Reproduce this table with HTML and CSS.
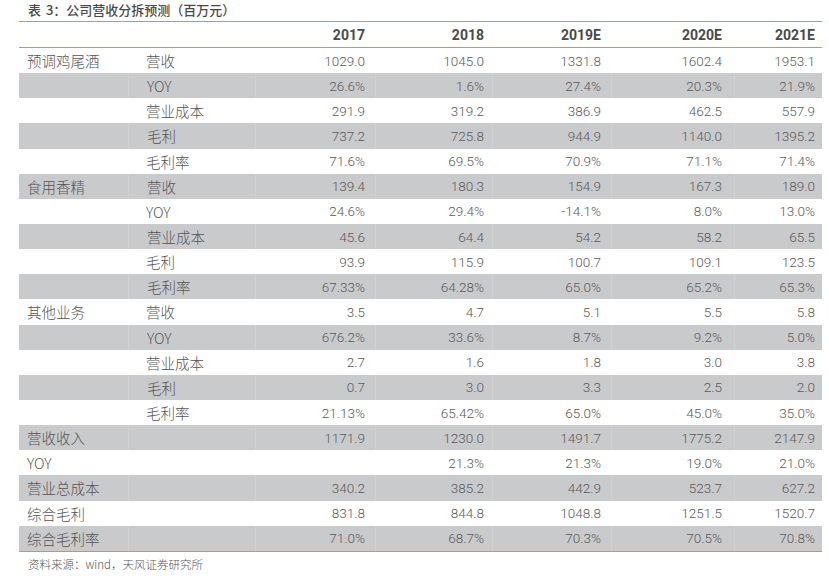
FILE: index.html
```html
<!DOCTYPE html>
<html lang="zh">
<head>
<meta charset="utf-8">
<title>表 3：公司营收分拆预测（百万元）</title>
<link rel="stylesheet" href="styles.css">
</head>
<body>
<div class="page">
  <div class="title">表 3：公司营收分拆预测（百万元）</div>
  <div class="table">
    <div class="row head"><div class="c1"></div><div class="c2"></div><div class="n">2017</div><div class="n">2018</div><div class="n">2019E</div><div class="n">2020E</div><div class="n">2021E</div></div>
    <div class="row"><div class="c1">预调鸡尾酒</div><div class="c2">营收</div><div class="n">1029.0</div><div class="n">1045.0</div><div class="n">1331.8</div><div class="n">1602.4</div><div class="n">1953.1</div></div>
    <div class="row alt"><div class="c1"></div><div class="c2">YOY</div><div class="n">26.6%</div><div class="n">1.6%</div><div class="n">27.4%</div><div class="n">20.3%</div><div class="n">21.9%</div></div>
    <div class="row"><div class="c1"></div><div class="c2">营业成本</div><div class="n">291.9</div><div class="n">319.2</div><div class="n">386.9</div><div class="n">462.5</div><div class="n">557.9</div></div>
    <div class="row alt"><div class="c1"></div><div class="c2">毛利</div><div class="n">737.2</div><div class="n">725.8</div><div class="n">944.9</div><div class="n">1140.0</div><div class="n">1395.2</div></div>
    <div class="row"><div class="c1"></div><div class="c2">毛利率</div><div class="n">71.6%</div><div class="n">69.5%</div><div class="n">70.9%</div><div class="n">71.1%</div><div class="n">71.4%</div></div>
    <div class="row alt"><div class="c1">食用香精</div><div class="c2">营收</div><div class="n">139.4</div><div class="n">180.3</div><div class="n">154.9</div><div class="n">167.3</div><div class="n">189.0</div></div>
    <div class="row"><div class="c1"></div><div class="c2">YOY</div><div class="n">24.6%</div><div class="n">29.4%</div><div class="n">-14.1%</div><div class="n">8.0%</div><div class="n">13.0%</div></div>
    <div class="row alt"><div class="c1"></div><div class="c2">营业成本</div><div class="n">45.6</div><div class="n">64.4</div><div class="n">54.2</div><div class="n">58.2</div><div class="n">65.5</div></div>
    <div class="row"><div class="c1"></div><div class="c2">毛利</div><div class="n">93.9</div><div class="n">115.9</div><div class="n">100.7</div><div class="n">109.1</div><div class="n">123.5</div></div>
    <div class="row alt"><div class="c1"></div><div class="c2">毛利率</div><div class="n">67.33%</div><div class="n">64.28%</div><div class="n">65.0%</div><div class="n">65.2%</div><div class="n">65.3%</div></div>
    <div class="row"><div class="c1">其他业务</div><div class="c2">营收</div><div class="n">3.5</div><div class="n">4.7</div><div class="n">5.1</div><div class="n">5.5</div><div class="n">5.8</div></div>
    <div class="row alt"><div class="c1"></div><div class="c2">YOY</div><div class="n">676.2%</div><div class="n">33.6%</div><div class="n">8.7%</div><div class="n">9.2%</div><div class="n">5.0%</div></div>
    <div class="row"><div class="c1"></div><div class="c2">营业成本</div><div class="n">2.7</div><div class="n">1.6</div><div class="n">1.8</div><div class="n">3.0</div><div class="n">3.8</div></div>
    <div class="row alt"><div class="c1"></div><div class="c2">毛利</div><div class="n">0.7</div><div class="n">3.0</div><div class="n">3.3</div><div class="n">2.5</div><div class="n">2.0</div></div>
    <div class="row"><div class="c1"></div><div class="c2">毛利率</div><div class="n">21.13%</div><div class="n">65.42%</div><div class="n">65.0%</div><div class="n">45.0%</div><div class="n">35.0%</div></div>
    <div class="row alt"><div class="c1">营收收入</div><div class="c2"></div><div class="n">1171.9</div><div class="n">1230.0</div><div class="n">1491.7</div><div class="n">1775.2</div><div class="n">2147.9</div></div>
    <div class="row"><div class="c1">YOY</div><div class="c2"></div><div class="n"></div><div class="n">21.3%</div><div class="n">21.3%</div><div class="n">19.0%</div><div class="n">21.0%</div></div>
    <div class="row alt"><div class="c1">营业总成本</div><div class="c2"></div><div class="n">340.2</div><div class="n">385.2</div><div class="n">442.9</div><div class="n">523.7</div><div class="n">627.2</div></div>
    <div class="row"><div class="c1">综合毛利</div><div class="c2"></div><div class="n">831.8</div><div class="n">844.8</div><div class="n">1048.8</div><div class="n">1251.5</div><div class="n">1520.7</div></div>
    <div class="row alt"><div class="c1">综合毛利率</div><div class="c2"></div><div class="n">71.0%</div><div class="n">68.7%</div><div class="n">70.3%</div><div class="n">70.5%</div><div class="n">70.8%</div></div>
  </div>
  <div class="note">资料来源：wind，天风证券研究所</div>
</div>
</body>
</html>
```

FILE: styles.css
```css
html, body {
  margin: 0;
  padding: 0;
  background: #ffffff;
}

.page {
  width: 829px;
  font-family: "Noto Sans CJK SC", "Noto Sans", sans-serif;
  color: #595959;
}

.title {
  height: 21px;
  line-height: 20px;
  padding-left: 28px;
  font-size: 13px;
  font-weight: 500;
  color: #4a4a4a;
  box-sizing: border-box;
  word-spacing: 2px;
}

.table {
  margin-left: 19px;
  width: 803px;
  border-bottom: 1px solid #ec8b3d;
}

.row {
  display: grid;
  grid-template-columns: 109px 127px 120px 117px 119px 123px 88px;
  height: 25.15px;
  align-items: stretch;
}

.row > div {
  display: flex;
  align-items: center;
  box-sizing: border-box;
  white-space: nowrap;
}

.row.head {
  height: 27px;
  border-top: 1px solid #ec8b3d;
  border-bottom: 1px solid #ec8b3d;
  box-sizing: border-box;
}

.row.head .n {
  font-family: "Roboto", "Noto Sans", sans-serif;
  font-weight: 700;
  font-size: 14px;
  color: #4a4a4a;
}

.row.alt {
  background: #c9cacc;
}

.row.alt > div + div {
  border-left: 1px solid #d0d1d3;
}

.c1 {
  padding-left: 8px;
  font-size: 14.5px;
  font-weight: 300;
  color: #555555;
}

.c2 {
  padding-left: 18px;
  font-size: 14.5px;
  font-weight: 300;
  color: #555555;
}

.n {
  justify-content: flex-end;
  font-family: "Roboto", "Noto Sans", sans-serif;
  font-weight: 300;
  font-size: 13.5px;
  color: #5a5a5a;
}

.row > .n:nth-child(3) { padding-right: 10px; }
.row > .n:nth-child(4) { padding-right: 8px; }
.row > .n:nth-child(5) { padding-right: 10px; }
.row > .n:nth-child(6) { padding-right: 12px; }
.row > .n:nth-child(7) { padding-right: 7px; }

.note {
  padding-left: 28px;
  padding-top: 4px;
  line-height: 16px;
  font-size: 11.5px;
  font-weight: 300;
  color: #555555;
}
```
